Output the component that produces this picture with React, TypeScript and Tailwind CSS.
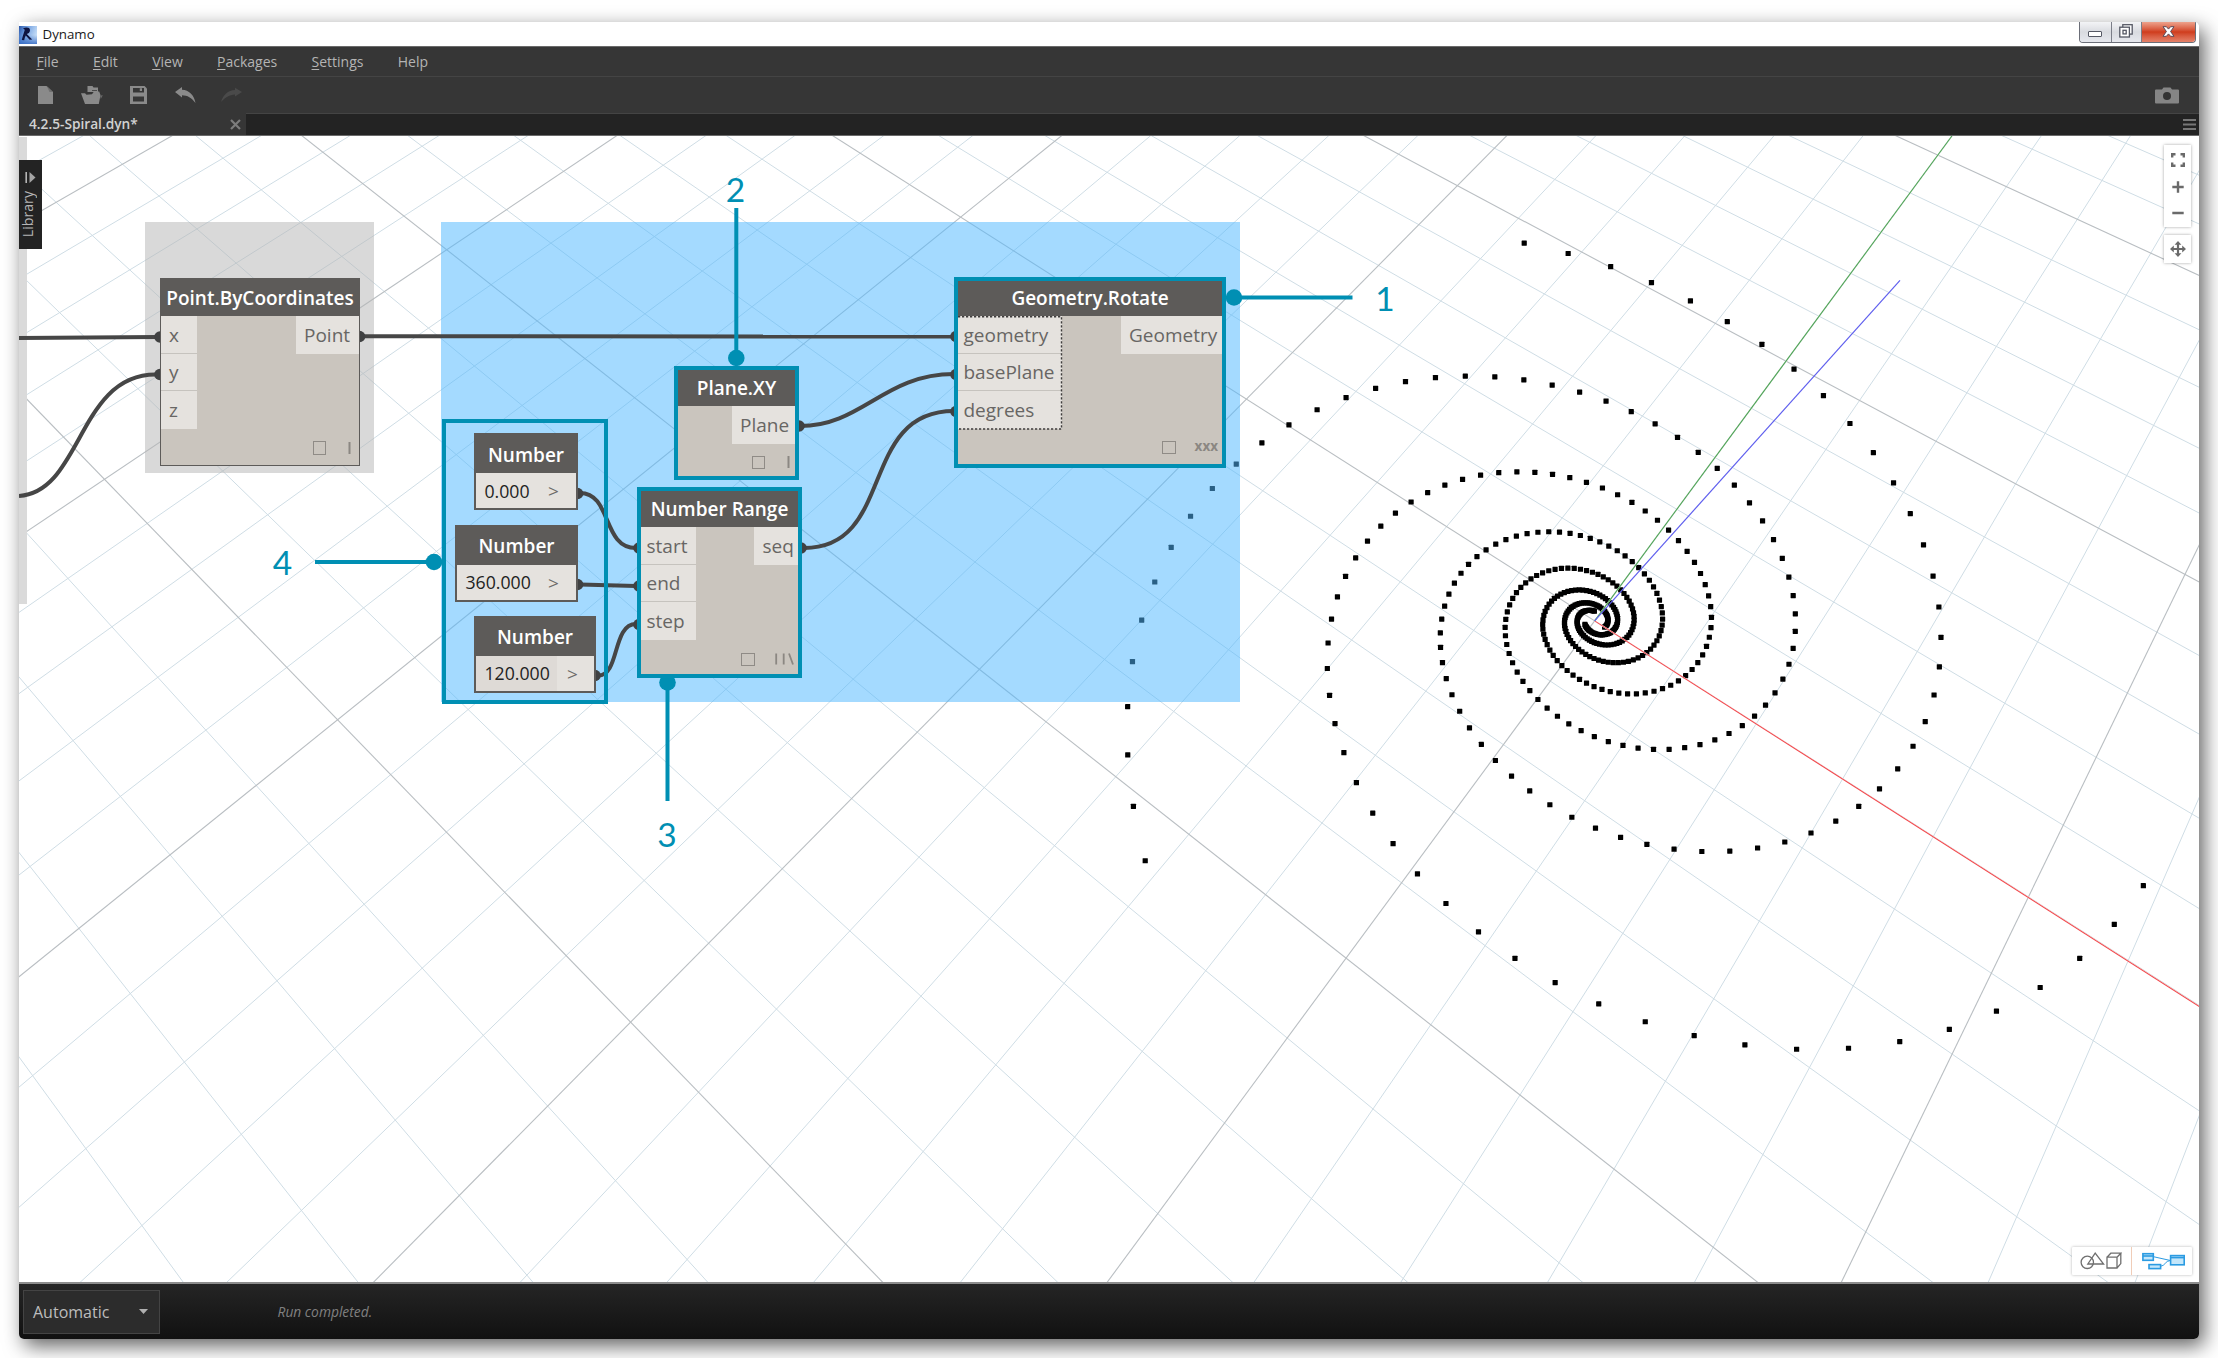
import type { ReactNode } from "react";

/* ---------- 3D preview geometry ---------- */

const depth = (x: number, y: number) => -0.0218611242 * x + 0.0259963238 * y + 1;

// Ground plane (x, y) to screen coordinates.
function project(x: number, y: number): [number, number] {
  const w = depth(x, y);
  return [
    (42.3992948 * x + 84.7043908 * y + 1594.63954) / w,
    (35.6256333 * x - 42.5408825 * y + 620.862351) / w,
  ];
}

type Line = { x1: number; y1: number; x2: number; y2: number; major: boolean };

function gridLines(): Line[] {
  const extent = 100;
  const near = 0.12;
  const lines: Line[] = [];
  for (let k = -60; k <= 60; k++) {
    for (const axis of ["x", "y"] as const) {
      const at = (t: number): [number, number] => (axis === "x" ? [k, t] : [t, k]);
      let a = -extent;
      let b = extent;
      const da = depth(...at(a));
      const db = depth(...at(b));
      if (da < near && db < near) continue;
      if (da < near) a = a + ((b - a) * (near - da)) / (db - da);
      else if (db < near) b = a + ((b - a) * (da - near)) / (da - db);
      const [x1, y1] = project(...at(a));
      const [x2, y2] = project(...at(b));
      lines.push({ x1, y1, x2, y2, major: k % 5 === 0 });
    }
  }
  return lines;
}

function spiralPoints(): [number, number][] {
  const pts: [number, number][] = [];
  for (let arm = 0; arm < 3; arm++) {
    for (let i = 0; i <= 148; i++) {
      const t = 0.1 * i - 2.085;
      const r = Math.exp(-1.51343 + 0.258995 * t);
      const a = t + (arm * 2 * Math.PI) / 3;
      pts.push(project(r * Math.cos(a), r * Math.sin(a)));
    }
  }
  return pts;
}

const GRID = gridLines();
const POINTS = spiralPoints();

function Preview() {
  return (
    <svg className="absolute left-0 top-0" width="2218" height="1358" viewBox="0 0 2218 1358">
      {GRID.filter((l) => !l.major).map((l, i) => (
        <line key={i} x1={l.x1} y1={l.y1} x2={l.x2} y2={l.y2} stroke="#cfdde5" strokeWidth="1" />
      ))}
      {GRID.filter((l) => l.major).map((l, i) => (
        <line key={i} x1={l.x1} y1={l.y1} x2={l.x2} y2={l.y2} stroke="#b9bec2" strokeWidth="1.1" />
      ))}
      {POINTS.map(([x, y], i) => (
        <rect key={i} x={x - 2.6} y={y - 2.6} width="5.2" height="5.2" rx="0.4" fill="#000" />
      ))}
      <line x1="1594.6" y1="620.9" x2="2200" y2="1007" stroke="#fff" strokeWidth="1.4" />
      <line x1="1594.6" y1="620.9" x2="2200" y2="1007" stroke="#f4474b" strokeWidth="1.1" />
      <line x1="1594.6" y1="620.9" x2="1951.9" y2="136" stroke="#fff" strokeWidth="1.4" />
      <line x1="1594.6" y1="620.9" x2="1951.9" y2="136" stroke="#4ea356" strokeWidth="1.1" />
      <line x1="1594.6" y1="620.9" x2="1900" y2="280.3" stroke="#5f5fee" strokeWidth="1.2" />
    </svg>
  );
}

/* ---------- wires ---------- */

const WIRES = [
  "M19 338 L158 337",
  "M19 496 C82 492 78 374 156 374.5",
  "M362 336.3 L954 336.5",
  "M800 426 C862 426 884 374 954 374",
  "M804 548 C896 548 858 411 954 411",
  "M580 493 C612 493 602 548 636 548",
  "M580 584.5 L636 586",
  "M598 675.5 C620 676 612 624 636 624",
];

const JOINTS: [number, number][] = [
  [160, 337], [160, 374.5], [359.5, 336.5], [956, 336.5], [956, 374.5], [956, 411.5],
  [799, 426], [801, 548], [577.5, 493.5], [577.5, 584.5], [595, 675.5],
  [639, 548], [639, 586], [639, 624.5],
];

function Wires() {
  return (
    <svg className="absolute left-0 top-0" width="2218" height="1358" viewBox="0 0 2218 1358">
      {WIRES.map((d) => (
        <path key={d} d={d} fill="none" stroke="#464646" strokeWidth="4" />
      ))}
      {JOINTS.map(([x, y], i) => (
        <circle key={i} cx={x} cy={y} r="5.8" fill="#404142" />
      ))}
    </svg>
  );
}

/* ---------- nodes ---------- */

function Port({ children, className = "" }: { children: ReactNode; className?: string }) {
  return (
    <div className={`flex items-center h-[37.5px] bg-[#e5e2de] pt-[1.5px] text-[19px] leading-none text-[#686664] ${className}`}>
      {children}
    </div>
  );
}

function Inputs({ names, className = "" }: { names: string[]; className?: string }) {
  return (
    <div className={`flex flex-col divide-y divide-[#c6c3be] bg-[#e5e2de] ${className}`}>
      {names.map((n) => (
        <Port key={n} className="pl-[5.5px]">{n}</Port>
      ))}
    </div>
  );
}

function Footer({ lacing, className }: { lacing: ReactNode; className: string }) {
  return (
    <div className={`absolute flex items-center justify-between ${className}`}>
      <div className="size-[13.5px] border-[1.5px] border-[#8f8b86]" />
      {lacing}
    </div>
  );
}

function Bars({ slanted = false }: { slanted?: boolean }) {
  return slanted ? (
    <svg width="19" height="12" viewBox="0 0 19 12" fill="none" stroke="#8b8782" strokeWidth="1.8">
      <path d="M1.2 0.5V11.5M8.7 0.5V11.5M14 0.5L18 11.5" />
    </svg>
  ) : (
    <svg width="3" height="12" viewBox="0 0 3 12" fill="none" stroke="#8b8782" strokeWidth="2">
      <path d="M1.5 0V12" />
    </svg>
  );
}

function Title({ children, className = "" }: { children: ReactNode; className?: string }) {
  return (
    <div className={`flex items-center justify-center bg-[#5d5b59] text-[19px] font-semibold leading-none text-white whitespace-nowrap ${className}`}>
      {children}
    </div>
  );
}

function NumberNode({ value, className, valueClass }: { value: string; className: string; valueClass: string }) {
  return (
    <div className={`absolute flex flex-col border-2 border-[#5d5b59] bg-[#e5e2de] ${className}`}>
      <Title className="h-[38px] pt-[2px]">Number</Title>
      <div className="flex flex-1 items-stretch leading-none">
        <div className={`flex items-center pl-[8.5px] pt-[2.5px] text-[17.7px] text-[#222] ${valueClass}`}>{value}</div>
        <div className="flex flex-1 items-center pl-2.5 pt-[2px] text-[19px] text-[#6d6b69]">&gt;</div>
      </div>
    </div>
  );
}

function Nodes() {
  return (
    <>
      <div className="absolute left-[160px] top-[278px] flex h-[188px] w-[200px] flex-col border-[1.5px] border-[#5d5b59] bg-[#cac5be]">
        <Title className="h-[37px] pt-px">Point.ByCoordinates</Title>
        <div className="flex items-start justify-between">
          <Inputs names={["x", "y", "z"]} className="w-[36px] [&>div]:pl-2" />
          <Port className="w-[63px] pl-[8px]">Point</Port>
        </div>
        <Footer className="bottom-[10.5px] right-[8.5px] w-[38px]" lacing={<Bars />} />
      </div>

      <NumberNode value="0.000" className="left-[474px] top-[433px] h-[77px] w-[104px]" valueClass="w-[62px]" />
      <NumberNode value="360.000" className="left-[455px] top-[524.5px] h-[77px] w-[123px]" valueClass="w-[81px]" />
      <NumberNode value="120.000" className="left-[474px] top-[615.5px] h-[77px] w-[122px]" valueClass="w-[81px] bg-[#dedad6]" />
      <div className="absolute left-[442px] top-[419px] h-[285px] w-[166px] border-4 border-[#008fb3]" />

      <div className="absolute left-[674px] top-[366px] flex h-[114px] w-[125px] flex-col border-4 border-[#008fb3] bg-[#cac5be]">
        <Title className="h-[36px]">Plane.XY</Title>
        <Port className="h-[36px] w-[63px] self-end pl-[8px]">Plane</Port>
        <Footer className="bottom-[7px] right-[5.5px] w-[38px]" lacing={<Bars />} />
      </div>

      <div className="absolute left-[637px] top-[487px] flex h-[191px] w-[165px] flex-col border-4 border-[#008fb3] bg-[#cac5be]">
        <Title className="h-[36px]">Number Range</Title>
        <div className="flex items-start justify-between">
          <Inputs names={["start", "end", "step"]} className="w-[55px]" />
          <Port className="w-[44px] pl-[8.5px]">seq</Port>
        </div>
        <Footer className="bottom-[8px] right-[4px] w-[53px]" lacing={<Bars slanted />} />
      </div>

      <div className="absolute left-[954px] top-[277px] flex h-[191px] w-[272px] flex-col border-4 border-[#008fb3] bg-[#cac5be]">
        <Title className="h-[35px]">Geometry.Rotate</Title>
        <div className="flex items-start justify-between">
          <Inputs names={["geometry", "basePlane", "degrees"]} className="w-[104px]" />
          <Port className="w-[101px] pl-[8px]">Geometry</Port>
        </div>
        <svg className="absolute left-0 top-[35px]" width="105" height="114" fill="none" stroke="#3f3d3c" strokeWidth="1.4" strokeDasharray="2.2 1.8">
          <path d="M0 0.8H103.5V113H0" />
        </svg>
        <Footer
          className="bottom-[9.5px] right-[4px] w-[56px]"
          lacing={<span className="pb-px text-[13.5px] font-bold leading-none text-[#8b8782]">xxx</span>}
        />
      </div>
    </>
  );
}

/* ---------- numbered callouts ---------- */

function Callouts() {
  const label = "absolute w-[40px] text-center font-['Lato',sans-serif] text-[33.5px] leading-[40px] text-[#008fb3]";
  return (
    <>
      <svg className="absolute left-0 top-0" width="2218" height="1358" viewBox="0 0 2218 1358">
        <g stroke="#008fb3" strokeWidth="4" fill="#008fb3">
          <path d="M1234 297.5H1352.5M736.3 208V358M667.5 683V801M315 562H434" />
        </g>
        <g fill="#008fb3">
          <circle cx="1234" cy="297.5" r="8.3" />
          <circle cx="736.3" cy="358" r="8.3" />
          <circle cx="667.5" cy="682.5" r="8.3" />
          <circle cx="434" cy="562" r="8.3" />
        </g>
      </svg>
      <div className={`${label} left-[1365px] top-[278px]`}>1</div>
      <div className={`${label} left-[715.5px] top-[169px]`}>2</div>
      <div className={`${label} left-[647px] top-[814px]`}>3</div>
      <div className={`${label} left-[262.5px] top-[541.5px]`}>4</div>
    </>
  );
}

/* ---------- canvas overlays ---------- */

function LibraryTab() {
  return (
    <div className="absolute left-[19px] top-[160px] flex h-[89px] w-[23px] flex-col items-center bg-[#232323] pt-[12px]">
      <svg width="11" height="11" viewBox="0 0 11 11">
        <path d="M1.2 0V11" stroke="#b5b5b5" strokeWidth="1.6" />
        <path d="M4.5 0L10.5 5.5L4.5 11Z" fill="#a5a5a5" />
      </svg>
      <span className="mr-[5px] mt-[8px] rotate-180 text-[14.2px] leading-[20px] text-[#b5b5b5] [writing-mode:vertical-rl]">
        Library
      </span>
    </div>
  );
}

function ViewControls() {
  return (
    <div className="absolute left-[2164px] top-[145px] flex w-[27px] flex-col gap-[8px]">
      <div className="flex h-[82px] flex-col items-center bg-white pt-[7.5px] shadow-[0_0_3px_rgba(0,0,0,0.35)]">
        <svg width="14" height="14" viewBox="0 0 14 14" fill="none" stroke="#6a6a6a" strokeWidth="2.4">
          <path d="M1.2 4.5V1.2H4.5M9.5 1.2H12.8V4.5M12.8 9.5V12.8H9.5M4.5 12.8H1.2V9.5" />
        </svg>
        <svg className="mt-[14px]" width="12" height="12" viewBox="0 0 12 12" stroke="#6a6a6a" strokeWidth="2.4">
          <path d="M6 0.3V11.7M0.3 6H11.7" />
        </svg>
        <svg className="mt-[14px]" width="12" height="12" viewBox="0 0 12 12" stroke="#6a6a6a" strokeWidth="2.6">
          <path d="M0.3 6H11.7" />
        </svg>
      </div>
      <div className="flex h-[28px] items-center justify-center bg-white shadow-[0_0_3px_rgba(0,0,0,0.35)]">
        <svg width="16" height="16" viewBox="0 0 16 16" fill="#6a6a6a">
          <path d="M8 0L11.4 3.8H9.1V6.9H12.2V4.6L16 8L12.2 11.4V9.1H9.1V12.2H11.4L8 16L4.6 12.2H6.9V9.1H3.8V11.4L0 8L3.8 4.6V6.9H6.9V3.8H4.6Z" />
        </svg>
      </div>
    </div>
  );
}

function ViewToggle() {
  return (
    <div className="absolute left-[2071.5px] top-[1246.5px] flex h-[28.5px] w-[120px] divide-x divide-[#f0cdb8] rounded-[1px] bg-white shadow-[0_0_3px_rgba(0,0,0,0.3)]">
      <div className="flex w-[60px] items-center justify-center">
        <svg width="42" height="18" viewBox="0 0 42 18" fill="none" stroke="#6f6f6f" strokeWidth="1.3">
          <circle cx="7.3" cy="10.3" r="6.2" />
          <path d="M7.8 12L15.2 1.2L23.6 12Z" />
          <path d="M27 5.2H37V16H27ZM27 5.2L30.8 1.2H40.8L37 5.2M40.8 1.2V11.6L37 16" />
        </svg>
      </div>
      <div className="flex w-[60px] items-center justify-center pl-[3px]">
        <svg width="43" height="18" viewBox="0 0 43 18" fill="#c3e6fa" stroke="#2b9be2" strokeWidth="1.6">
          <path d="M11 4.6L28 8.4M18.5 14.3C23 14 23.5 8.6 28 8.6" fill="none" strokeWidth="1" />
          <rect x="0.9" y="1.7" width="10.4" height="6.6" />
          <path d="M1 4H11.3" />
          <rect x="7" y="12.6" width="11.6" height="4" />
          <rect x="28.6" y="3.6" width="13.6" height="9.2" />
          <path d="M28.6 5.6H42.2" />
        </svg>
      </div>
    </div>
  );
}

/* ---------- window chrome ---------- */

function TitleBar() {
  return (
    <div className="flex h-[24px] items-center bg-white">
      <svg className="mt-[2px]" width="18" height="18" viewBox="0 0 18 18">
        <defs>
          <linearGradient id="logo" x1="0" y1="0" x2="1" y2="0.4">
            <stop offset="0" stopColor="#2a56a8" />
            <stop offset="0.4" stopColor="#6f9ee0" />
            <stop offset="1" stopColor="#c4dcf6" />
          </linearGradient>
          <linearGradient id="logoBase" x1="0" y1="0" x2="0" y2="1">
            <stop offset="0.5" stopColor="#2a62c0" stopOpacity="0" />
            <stop offset="1" stopColor="#2a62c0" stopOpacity="0.8" />
          </linearGradient>
        </defs>
        <rect width="18" height="18" fill="url(#logo)" />
        <rect width="18" height="18" fill="url(#logoBase)" />
        <path d="M4 2.5C7 1 11 1.2 11 4.2C11 6.6 9.2 7.6 7.8 8L13.2 13.6L10.6 13.8L6.8 9.6C6 11 5.4 12.6 5.2 14.2L2.8 14C3.6 10.4 5 6.4 5.8 3.8Z" fill="#0e1440" />
      </svg>
      <span className="ml-[5.5px] pt-[2px] text-[13.3px] leading-none text-[#1a1a1a]">Dynamo</span>
      <div className="ml-auto mr-[3.5px] flex h-[20.5px] w-[117px] self-start overflow-hidden rounded-b-[4px] border border-t-0 border-[#6b6e78]">
        <div className="flex w-[32px] items-end justify-center border-r border-[#7b7e88] bg-gradient-to-b from-[#f3f4f6] via-[#d9dbe0] to-[#e6e8ee] pb-[5px]">
          <div className="h-[6px] w-[14px] rounded-[1px] border-[1.5px] border-[#555864] bg-white" />
        </div>
        <div className="flex w-[30px] items-center justify-center border-r border-[#7b7e88] bg-gradient-to-b from-[#f3f4f6] via-[#d9dbe0] to-[#e6e8ee] pb-[2px]">
          <svg width="14" height="14" viewBox="0 0 14 14" fill="#fff" stroke="#555864" strokeWidth="1.3">
            <rect x="3.8" y="0.7" width="9.4" height="9.4" />
            <rect x="0.8" y="3.2" width="9.6" height="9.8" />
            <rect x="4" y="6.3" width="3.2" height="3.6" />
          </svg>
        </div>
        <div className="flex flex-1 items-center justify-center bg-gradient-to-b from-[#eda28c] via-[#cf3c1c] via-50% to-[#e4826a] pb-[1px]">
          <svg width="13" height="11" viewBox="0 0 13 11">
            <path d="M1 0.7H4.4L6.5 3.1L8.6 0.7H12L8.6 5.5L12 10.3H8.6L6.5 7.9L4.4 10.3H1L4.4 5.5Z" fill="#fff" stroke="#5a4a58" strokeWidth="1" />
          </svg>
        </div>
      </div>
    </div>
  );
}

function MenuBar() {
  const items = ["File", "Edit", "View", "Packages", "Settings"];
  return (
    <div className="flex h-[30px] items-center gap-[34.3px] border-t border-[#6a6a6a] bg-[#363636] pl-[17.5px] text-[14px] leading-none text-[#b4b4b4]">
      {items.map((m) => (
        <span key={m}>
          <span className="underline decoration-1 underline-offset-2">{m[0]}</span>
          {m.slice(1)}
        </span>
      ))}
      <span>Help</span>
    </div>
  );
}

function ToolBar() {
  return (
    <div className="flex h-[37px] items-center border-t border-[#444] bg-[#363636] pl-[19px] pr-[20px]">
      <svg width="15" height="18" viewBox="0 0 15 18">
        <path d="M0 0H8.5L15 6V18H0Z" fill="#8a8a8a" />
        <path d="M8.8 0L15 6H11.5Z" fill="#707070" />
      </svg>
      <svg className="ml-[28px]" width="22" height="18" viewBox="0 0 22 18" fill="#8a8a8a">
        <path d="M6.5 0H11.5L12.5 1.5H17V6H6.5Z" />
        <path d="M0 7.2L4 7.2L5.5 8.8L11 8.2L13 5.6H18.2L19.5 9L17.8 18H4Z" />
        <path d="M19 9.5L21.8 9.2L19.8 13Z" fill="#6a6a6a" />
        <path d="M11 4.2H16V5H11Z" fill="#363636" />
      </svg>
      <svg className="ml-[27px]" width="17" height="18" viewBox="0 0 17 18">
        <path d="M0 0H14.5L17 2.5V18H0Z" fill="#8a8a8a" />
        <path d="M3 2H14V6.6H3ZM3 10.6H14V15.6H3Z" fill="#363636" />
        <path d="M9.8 2.2H12V5H9.8Z" fill="#8a8a8a" />
      </svg>
      <svg className="ml-[28px]" width="21" height="16" viewBox="0 0 21 16">
        <path d="M0 5L7 0V2.8C14 3.2 19 8 20.5 16C16.5 10.5 12.5 8.4 7 8.2V10.6Z" fill="#8a8a8a" />
      </svg>
      <svg className="ml-[25px]" width="21" height="16" viewBox="0 0 21 16">
        <path d="M21 5L14 0.8V3C7 3.2 2 8 0 15C4 10.5 8.5 7.6 14 7.4V9.6Z" fill="#4a4a4a" />
      </svg>
      <svg className="ml-auto" width="24" height="17" viewBox="0 0 24 17">
        <path d="M1 2.5H7L8.5 0.4H15.5L17 2.5H23Q24 2.5 24 3.5V15.5Q24 16.5 23 16.5H1Q0 16.5 0 15.5V3.5Q0 2.5 1 2.5Z" fill="#858585" />
        <circle cx="12" cy="9" r="4" fill="#333" />
      </svg>
    </div>
  );
}

function TabBar() {
  return (
    <div className="flex h-[23px] border-b border-[#6a6a6a] bg-[#232323]">
      <div className="flex w-[227px] items-center justify-between bg-[#363636] pl-[10px] pr-[5px]">
        <span className="text-[13.7px] font-semibold leading-none text-[#d2d2d2]">4.2.5-Spiral.dyn*</span>
        <svg width="11" height="11" viewBox="0 0 11 11" stroke="#7d7d7d" strokeWidth="2.2">
          <path d="M1 1L10 10M10 1L1 10" />
        </svg>
      </div>
      <div className="flex flex-1 items-center justify-end border-t border-[#444] pr-[3px]">
        <svg width="13" height="11" viewBox="0 0 13 11" stroke="#777" strokeWidth="1.8">
          <path d="M0 1H13M0 5.5H13M0 10H13" />
        </svg>
      </div>
    </div>
  );
}

function StatusBar() {
  return (
    <div className="flex h-[57px] items-center border-t-2 border-[#8c8c8c] bg-gradient-to-b from-[#252525] to-[#111] pl-[4px]">
      <div className="flex h-[44px] w-[137px] items-center justify-between border border-[#444] bg-[#2c2c2c] pl-[9px] pr-[11px]">
        <span className="text-[16px] leading-none text-[#bdbdbd]">Automatic</span>
        <svg width="9" height="5" viewBox="0 0 9 5">
          <path d="M0 0H9L4.5 5Z" fill="#b0b0b0" />
        </svg>
      </div>
      <span className="ml-[117.5px] pt-px text-[13.8px] italic leading-none text-[#808080]">Run completed.</span>
    </div>
  );
}

export default function App() {
  return (
    <div className="h-[1358px] w-[2218px] overflow-hidden bg-white pl-[19px] pt-[22px] font-['Open_Sans',sans-serif]">
      <div className="flex h-[1317px] w-[2180px] flex-col rounded-b-[5px] rounded-tr-[5px] shadow-[5px_7px_20px_rgba(0,0,0,0.62)]">
        <div className="flex h-full flex-col overflow-hidden rounded-b-[5px] rounded-tr-[5px]">
          <TitleBar />
          <MenuBar />
          <ToolBar />
          <TabBar />
          <div className="relative flex-1 overflow-hidden bg-white">
            {/* free canvas in window coordinates */}
            <div className="absolute -left-[19px] -top-[136px] h-[1358px] w-[2218px]">
              <Preview />
              <div className="absolute left-[19px] top-[137px] h-[467px] w-[8px] bg-[#dadada]" />
              <div className="absolute left-[145px] top-[222px] h-[251px] w-[229px] bg-[rgb(182,182,182)]/52" />
              <div className="absolute left-[441px] top-[222px] h-[480px] w-[799px] bg-[rgb(81,185,255)]/52" />
              <LibraryTab />
              <Wires />
              <Nodes />
              <Callouts />
              <ViewControls />
              <ViewToggle />
            </div>
          </div>
          <StatusBar />
        </div>
      </div>
    </div>
  );
}
